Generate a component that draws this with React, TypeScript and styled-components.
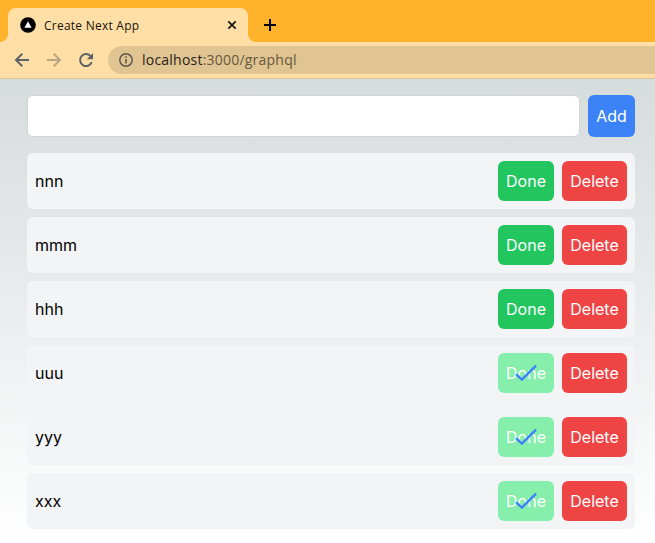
import React from 'react';
import styled, { createGlobalStyle } from 'styled-components';

const GlobalStyle = createGlobalStyle`
  * { box-sizing: border-box; }
  html, body { margin: 0; padding: 0; }
  body { overflow: hidden; font-family: Inter, sans-serif; }
`;

const Browser = styled.div`
  width: 655px;
  height: 543px;
  display: flex;
  flex-direction: column;
  overflow: hidden;
`;

const TabStrip = styled.div`
  height: 42px;
  flex: none;
  display: flex;
  align-items: flex-end;
  background: #ffb22c;
`;

const TabCurve = styled.div<{ $side: 'left' | 'right' }>`
  width: 8px;
  height: 8px;
  background: radial-gradient(
    circle at ${({ $side }) => ($side === 'left' ? '0 0' : '100% 0')},
    transparent 7.5px,
    #ffdfa6 8.2px
  );
`;

const Tab = styled.div`
  width: 240px;
  height: 34px;
  display: flex;
  align-items: center;
  padding: 0 9px 0 12px;
  border-radius: 8px 8px 0 0;
  background: #ffdfa6;
`;

const TabTitle = styled.span`
  flex: 1;
  margin-left: 8px;
  padding-top: 2px;
  font: 12px/18px 'Open Sans', 'Noto Sans', sans-serif;
  letter-spacing: 0.24px;
  color: #17130c;
`;

const NewTab = styled.div`
  display: flex;
  margin-left: 6px;
  padding-bottom: 9px;
`;

const Toolbar = styled.div`
  height: 37px;
  flex: none;
  display: flex;
  align-items: flex-start;
  padding: 4px 0 0 12px;
  background: #ffdfa6;
  border-bottom: 1px solid #dfc798;
`;

const NavIcons = styled.div`
  width: 96px;
  height: 28px;
  display: flex;
  align-items: center;
  gap: 12px;
  svg { display: block; }
`;

const AddressBar = styled.div`
  flex: 1;
  height: 28px;
  display: flex;
  align-items: center;
  padding-left: 8px;
  border-radius: 14px 0 0 14px;
  background: #e0c492;
`;

const Url = styled.span`
  margin-left: 6px;
  font: 14px/20px 'Open Sans', 'Noto Sans', sans-serif;
  letter-spacing: 0.22px;
  color: #66593f;
`;

const Host = styled.span`
  color: #28231a;
`;

const Page = styled.main`
  flex: 1;
  padding: 16px 20px 0 27px;
  background: linear-gradient(to bottom, rgb(214, 219, 220), rgb(255, 255, 255));
`;

const AddForm = styled.div`
  display: flex;
  gap: 8px;
  height: 42px;
  margin-bottom: 16px;
`;

const TextInput = styled.input`
  flex: 1;
  min-width: 0;
  height: 42px;
  padding: 8px;
  border: 1px solid #d1d5db;
  border-radius: 6px;
  background: #fff;
  font: 16px/24px Inter, sans-serif;
  outline: none;
`;

const Button = styled.button<{ $color: string; $width: number }>`
  position: relative;
  display: flex;
  align-items: center;
  justify-content: center;
  width: ${({ $width }) => $width}px;
  min-height: 40px;
  padding: 0;
  border: 0;
  border-radius: 6px;
  background: ${({ $color }) => $color};
  color: #fff;
  font: 16px/24px Inter, sans-serif;
`;

const List = styled.div`
  display: flex;
  flex-direction: column;
  gap: 8px;
`;

const Row = styled.div`
  height: 56px;
  display: flex;
  align-items: center;
  gap: 8px;
  padding: 8px;
  border-radius: 6px;
  background: #f3f4f6;
`;

const RowText = styled.span`
  flex: 1;
  font: 16px/24px Inter, sans-serif;
  color: #000;
`;

const CheckMark = styled.svg`
  position: absolute;
  left: 16px;
  top: 8px;
`;

const items = [
  { text: 'nnn', done: false },
  { text: 'mmm', done: false },
  { text: 'hhh', done: false },
  { text: 'uuu', done: true },
  { text: 'yyy', done: true },
  { text: 'xxx', done: true },
];

function TodoRow({ text, done }: { text: string; done: boolean }) {
  return (
    <Row>
      <RowText>{text}</RowText>
      <Button $color={done ? '#86efac' : '#22c55e'} $width={56}>
        Done
        {done && (
          <CheckMark width="24" height="24" viewBox="0 0 24 24" fill="none" stroke="#3b82f6" strokeWidth="2.5" strokeLinecap="round" strokeLinejoin="round">
            <path d="M2.9 13.8L7.9 18.6L21.3 5.4" />
          </CheckMark>
        )}
      </Button>
      <Button $color="#ef4444" $width={65}>Delete</Button>
    </Row>
  );
}

export default function App() {
  return (
    <Browser>
      <GlobalStyle />
      <TabStrip>
        <TabCurve $side="left" />
        <Tab>
          <svg width="16" height="16" viewBox="0 0 16 16">
            <circle cx="8" cy="8" r="7.8" fill="#000" />
            <path d="M8 4.3L11.6 10.7H4.4Z" fill="#fff" />
          </svg>
          <TabTitle>Create Next App</TabTitle>
          <svg width="14" height="14" viewBox="0 0 14 14">
            <path d="M3.3 3.3L10.7 10.7M10.7 3.3L3.3 10.7" stroke="#17130c" strokeWidth="1.7" />
          </svg>
        </Tab>
        <TabCurve $side="right" />
        <NewTab>
          <svg width="16" height="16" viewBox="0 0 16 16">
            <path d="M8 2V14M2 8H14" stroke="#000" strokeWidth="2" />
          </svg>
        </NewTab>
      </TabStrip>
      <Toolbar>
        <NavIcons>
          <svg width="20" height="20" viewBox="0 0 20 20" fill="none" stroke="#5f6368" strokeWidth="2">
            <path d="M17 10H4.5M10.3 3.7L4 10L10.3 16.3" />
          </svg>
          <svg width="20" height="20" viewBox="0 0 20 20" fill="none" stroke="#b8a582" strokeWidth="2">
            <path d="M3 10H15.5M9.7 3.7L16 10L9.7 16.3" />
          </svg>
          <svg width="20" height="20" viewBox="0 0 20 20">
            <path d="M15.7 12.2A6 6 0 1 1 14.4 5.9" fill="none" stroke="#5f6368" strokeWidth="2" />
            <path d="M17 3V9.2H10.8Z" fill="#5f6368" />
          </svg>
        </NavIcons>
        <AddressBar>
          <svg width="20" height="20" viewBox="0 0 20 20">
            <circle cx="10" cy="10" r="6.2" fill="none" stroke="#5f5a50" strokeWidth="1.5" />
            <path d="M10 9V13.5M10 6.2V7.8" stroke="#5f5a50" strokeWidth="1.6" />
          </svg>
          <Url><Host>localhost</Host>:3000/graphql</Url>
        </AddressBar>
      </Toolbar>
      <Page>
        <AddForm>
          <TextInput />
          <Button $color="#3b82f6" $width={47}>Add</Button>
        </AddForm>
        <List>
          {items.map((item) => (
            <TodoRow key={item.text} text={item.text} done={item.done} />
          ))}
        </List>
      </Page>
    </Browser>
  );
}
